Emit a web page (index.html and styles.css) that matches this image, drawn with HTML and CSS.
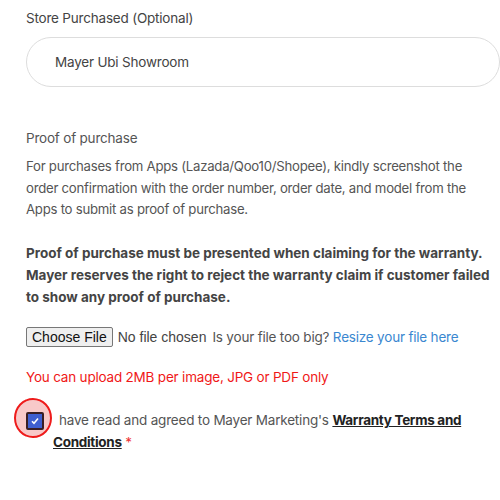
FILE: index.html
```html
<!DOCTYPE html>
<html lang="en">
<head>
  <meta charset="UTF-8" />
  <meta name="viewport" content="width=device-width, initial-scale=1.0"/>
  <title>Warranty Registration</title>
  <link rel="stylesheet" href="styles.css">
</head>
<body>
  <form class="form">
    <label class="field-label" for="store">Store Purchased (Optional)</label>
    <input type="text" id="store" class="pill-input" value="Mayer Ubi Showroom" />

    <h3 class="section-title">Proof of purchase</h3>
    <p class="note">For purchases from Apps (Lazada/Qoo10/Shopee), kindly screenshot the order confirmation with the order number, order date, and model from the Apps to submit as proof of purchase.</p>

    <p class="note strong">Proof of purchase must be presented when claiming for the warranty. Mayer reserves the right to reject the warranty claim if customer failed to show any proof of purchase.</p>

    <div class="file-row">
      <span class="file-btn">Choose File</span>
      <span class="file-name">No file chosen</span>
      <span class="file-help">Is your file too big? <a href="#" class="resize-link">Resize your file here</a></span>
    </div>

    <p class="warning">You can upload 2MB per image, JPG or PDF only</p>

    <div class="agree">
      <span class="check-wrap">
        <span class="check">
          <svg width="10" height="10" viewBox="0 0 10 10"><path d="M2 5.2l2 2.1L8 2.6" fill="none" stroke="#fff" stroke-width="1.6"/></svg>
        </span>
      </span>
      <span class="agree-text">have read and agreed to Mayer Marketing's <a href="#" class="terms"><span>Warranty Terms and</span> <span>Conditions</span></a> <span class="req">*</span></span>
    </div>
  </form>
</body>
</html>
```

FILE: styles.css
```css
body {
  margin: 0;
  background: #fff;
  font-family: Inter, 'Noto Sans', sans-serif;
  font-size: 13.5px;
  letter-spacing: -0.2px;
  color: #555;
}
.form {
  padding: 8px 0 0 26px;
}
.field-label {
  display: block;
  color: #444;
  line-height: 20px;
}
.pill-input {
  box-sizing: border-box;
  display: block;
  width: 474px;
  height: 50px;
  margin-top: 9px;
  padding: 0 28px;
  border: 1px solid #ddd;
  border-radius: 25px;
  font-family: inherit;
  font-size: 13.5px;
  letter-spacing: -0.2px;
  color: #444;
  outline: none;
}
.section-title {
  margin: 41px 0 0;
  font-size: 13.5px;
  font-weight: normal;
  line-height: 20px;
}
.note {
  margin: 8px 0 0;
  width: 468px;
  font-size: 13.2px;
  letter-spacing: -0.25px;
  line-height: 21.7px;
}
.strong {
  margin-top: 22px;
  font-size: 13.5px;
  font-weight: bold;
  letter-spacing: 0;
  color: #444;
  width: 468px;
}
.file-row {
  display: flex;
  align-items: center;
  margin-top: 19px;
  font-family: 'Liberation Sans', Arial, sans-serif;
  font-size: 14px;
  letter-spacing: 0;
}
.file-btn {
  padding: 1px 5px;
  border: 1px solid #777;
  border-radius: 2px;
  background: #efefef;
  color: #111;
  line-height: 16px;
}
.file-name {
  margin-left: 5px;
  color: #444;
}
.file-help {
  margin-left: 6px;
  font-family: Inter, 'Noto Sans', sans-serif;
  font-size: 13.5px;
  letter-spacing: -0.2px;
}
.resize-link {
  color: #3a87d0;
  text-decoration: none;
}
.warning {
  margin: 20px 0 0;
  color: #f01818;
  line-height: 20px;
}
.agree {
  display: flex;
  margin-top: 22px;
  line-height: 22px;
}
.check-wrap {
  position: relative;
  flex: none;
  width: 27px;
  height: 22px;
}
.check-wrap::before {
  content: "";
  position: absolute;
  left: -12px;
  top: -11px;
  width: 38px;
  height: 40px;
  border: 2px solid #ee1b1b;
  border-radius: 50%;
  background: #f8c9c9;
  box-sizing: border-box;
}
.check {
  position: absolute;
  left: 0;
  top: 3px;
  width: 14px;
  height: 14px;
  border: 2px solid #3a1e24;
  border-radius: 2px;
  background: #3f5fd0;
  display: flex;
  align-items: center;
  justify-content: center;
}
.agree-text {
  width: 420px;
  text-indent: 6px;
}
.terms {
  color: #222;
  font-weight: bold;
  letter-spacing: -0.3px;
}
.req {
  color: #e33;
}
```
